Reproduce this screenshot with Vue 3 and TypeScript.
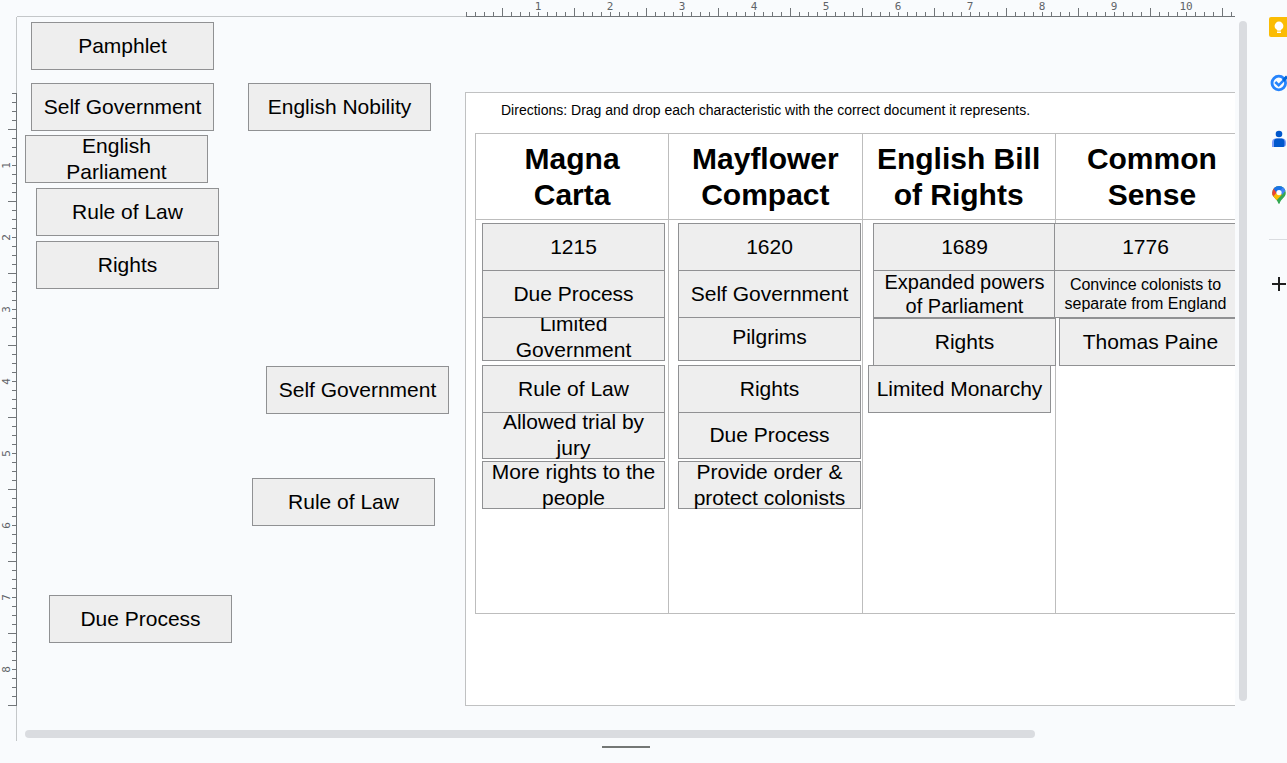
<script setup lang="ts">
interface Tile {
  text: string
  x: number
  y: number
  size?: 'medium' | 'small'
}

const W = 183

// Tiles in stacking order, placed on the free canvas (origin: inner corner of the rulers).
const tiles: Tile[] = [
  { text: 'Pamphlet', x: 14, y: 5 },
  { text: 'Self Government', x: 14, y: 66 },
  { text: 'English Nobility', x: 231, y: 66 },
  { text: 'English Parliament', x: 8, y: 118 },
  { text: 'Rule of Law', x: 19, y: 171 },
  { text: 'Rights', x: 19, y: 224 },
  { text: 'Self Government', x: 249, y: 349 },
  { text: 'Rule of Law', x: 235, y: 461 },
  { text: 'Due Process', x: 32, y: 578 },
  { text: '1215', x: 465, y: 206 },
  { text: 'Limited Government', x: 465, y: 296 },
  { text: 'Due Process', x: 465, y: 253 },
  { text: 'Allowed trial by jury', x: 465, y: 394 },
  { text: 'Rule of Law', x: 465, y: 348 },
  { text: 'More rights to the people', x: 465, y: 444 },
  { text: '1620', x: 661, y: 206 },
  { text: 'Pilgrims', x: 661, y: 296 },
  { text: 'Self Government', x: 661, y: 253 },
  { text: 'Due Process', x: 661, y: 394 },
  { text: 'Rights', x: 661, y: 348 },
  { text: 'Provide order & protect colonists', x: 661, y: 444 },
  { text: '1689', x: 856, y: 206 },
  { text: 'Expanded powers of Parliament', x: 856, y: 253, size: 'medium' },
  { text: 'Rights', x: 856, y: 301 },
  { text: 'Limited Monarchy', x: 851, y: 348 },
  { text: '1776', x: 1037, y: 206 },
  { text: 'Convince colonists to separate from England', x: 1037, y: 253, size: 'small' },
  { text: 'Thomas Paine', x: 1042, y: 301 },
]

const headings = ['Magna Carta', 'Mayflower Compact', 'English Bill of Rights', 'Common Sense']
const topInches = [1, 2, 3, 4, 5, 6, 7, 8, 9, 10]
const leftInches = [1, 2, 3, 4, 5, 6, 7, 8]

const place = (t: Tile) => ({ left: `${t.x}px`, top: `${t.y}px`, width: `${W}px` })
</script>

<template>
  <div class="app">
    <main class="editor">
      <div class="ruler-top" aria-hidden="true">
        <div class="scale-x">
          <span class="lead-x"></span>
          <span v-for="n in topInches" :key="n" class="inch-x">{{ n }}</span>
          <span class="inch-x"></span>
        </div>
      </div>
      <div class="ruler-left" aria-hidden="true">
        <div class="scale-y">
          <span class="lead-y"></span>
          <span v-for="n in leftInches" :key="n" class="inch-y"><b>{{ n }}</b></span>
          <span class="inch-y"></span>
        </div>
      </div>
      <div class="canvas">
        <section class="page">
          <p class="directions">
            Directions: Drag and drop each characteristic with the correct document it represents.
          </p>
          <table class="chart">
            <thead>
              <tr>
                <th v-for="h in headings" :key="h" scope="col">{{ h }}</th>
              </tr>
            </thead>
            <tbody>
              <tr>
                <td v-for="h in headings" :key="h"></td>
              </tr>
            </tbody>
          </table>
        </section>
        <div v-for="(t, i) in tiles" :key="i" class="tile" :class="t.size" :style="place(t)">
          <span>{{ t.text }}</span>
        </div>
      </div>
      <div class="bar-y"><div class="thumb-y"></div></div>
      <div class="bar-x"><div class="thumb-x"></div></div>
      <div class="grip"><div class="handle"></div></div>
    </main>

    <aside class="panel">
      <button type="button" aria-label="Keep">
        <svg width="20" height="20" viewBox="0 0 20 20">
          <rect x="0" y="0" width="20" height="20" rx="2" fill="#fbbc04" />
          <circle cx="10" cy="9" r="4.4" fill="#fff" />
          <path d="M8 11h4v2.600H8zM8 14.400h4v1.500H8z" fill="#fff" />
        </svg>
      </button>
      <button type="button" aria-label="Tasks">
        <svg width="20" height="20" viewBox="0 0 20 20">
          <circle cx="9.800" cy="10" r="6.800" fill="none" stroke="#2684fc" stroke-width="2.800" />
          <path d="M6.300 9l3.400 3.300L18 4" fill="none" stroke="#2684fc" stroke-width="2.600" />
          <path d="M13.200 6.600l3.800-4 2.200 2-4 4.200z" fill="#0066da" />
        </svg>
      </button>
      <button type="button" aria-label="Contacts">
        <svg width="20" height="20" viewBox="0 0 20 20">
          <path d="M3 18v-4.500a4 4 0 0 1 4-4h6a4 4 0 0 1 4 4V15a3 3 0 0 1-3 3z" fill="#7b9bf9" />
          <circle cx="10" cy="5" r="3.300" fill="#0057cc" />
          <path d="M5 18v-5.500a3 3 0 0 1 3-3h5a3 3 0 0 1 2.500 3V15a3 3 0 0 1-1 3z" fill="#0057cc" />
        </svg>
      </button>
      <button type="button" aria-label="Maps">
        <svg width="20" height="20" viewBox="0 0 20 20">
          <defs>
            <clipPath id="pin">
              <path d="M10 1a6.800 6.800 0 0 0-6.800 6.800c0 5 4.800 5.700 6.100 10.500q.7 1.400 1.400 0c1.300-4.800 6.100-5.500 6.100-10.500A6.800 6.800 0 0 0 10 1z" />
            </clipPath>
          </defs>
          <g clip-path="url(#pin)">
            <path d="M0 0h20v20H0z" fill="#34a853" />
            <path d="M0 11.500L8 5l5 4.500L6 17z" fill="#fbbc04" />
            <path d="M0 0h5l4 6-6 7-3-2z" fill="#ea4335" />
            <path d="M4 3l3-3h10v4l-8.500 5z" fill="#1a73e8" />
            <path d="M11 6l4-5 3 3-5 6z" fill="#4285f4" />
          </g>
          <circle cx="10" cy="7.600" r="2.600" fill="#fff" />
        </svg>
      </button>
      <hr />
      <button type="button" aria-label="Get add-ons">
        <svg width="20" height="20" viewBox="0 0 20 20">
          <path d="M10 3v14M3 10h14" stroke="#1f1f1f" stroke-width="2" />
        </svg>
      </button>
    </aside>
  </div>
</template>

<style>
body {
  margin: 0;
  background: #f9fbfd;
}
</style>

<style scoped>
.app {
  display: flex;
  height: 100vh;
  overflow: hidden;
  background: #f9fbfd;
  font-family: "Liberation Sans", Arial, sans-serif;
  color: #000;
}
.editor {
  flex: 1;
  min-width: 0;
  display: grid;
  grid-template-columns: 17px minmax(0, 1fr) 12px;
  grid-template-rows: 17px minmax(0, 1fr) 20px 22px;
}
.ruler-top {
  grid-column: 2;
  grid-row: 1;
  overflow: hidden;
  box-shadow: inset 0 -1px #c4c7c9;
}
.scale-x {
  display: flex;
  height: 17px;
  margin-left: 449px;
  overflow: hidden;
  border-bottom: 1px solid #717579;
  box-sizing: border-box;
}
.inch-x,
.lead-x {
  flex: none;
  box-sizing: border-box;
  height: 16px;
  background: repeating-linear-gradient(90deg, #717579 0 1px, transparent 1px 9px) 0 100% / 100% 4px no-repeat;
}
.lead-x {
  width: 36px;
}
.inch-x {
  width: 72px;
  background:
    linear-gradient(#717579, #717579) 0 100% / 1px 8px no-repeat,
    repeating-linear-gradient(90deg, #717579 0 1px, transparent 1px 9px) 0 100% / 100% 4px no-repeat;
  font: 11px/14px "DejaVu Sans Mono", monospace;
  color: #5f6368;
  text-align: center;
}
.ruler-left {
  grid-column: 1;
  grid-row: 2 / 4;
  padding-top: 76px;
  box-shadow: inset -1px 0 #c4c7c9;
}
.scale-y {
  display: flex;
  flex-direction: column;
  width: 17px;
  height: 613px;
  overflow: hidden;
  border-right: 1px solid #717579;
  box-sizing: border-box;
}
.lead-y,
.inch-y {
  flex: none;
  width: 16px;
  background: repeating-linear-gradient(#717579 0 1px, transparent 1px 9px) 100% 0 / 4px 100% no-repeat;
}
.lead-y {
  height: 36px;
}
.inch-y {
  display: flex;
  align-items: center;
  height: 72px;
  background:
    linear-gradient(#717579, #717579) 100% 0 / 8px 1px no-repeat,
    repeating-linear-gradient(#717579 0 1px, transparent 1px 9px) 100% 0 / 4px 100% no-repeat;
}
.inch-y b {
  writing-mode: vertical-rl;
  transform: rotate(180deg);
  font: 11px/14px "DejaVu Sans Mono", monospace;
  color: #5f6368;
}
.canvas {
  grid-column: 2;
  grid-row: 2;
  position: relative;
  overflow: hidden;
}
.page {
  box-sizing: border-box;
  width: 1000px;
  height: 614px;
  margin: 75px 0 0 448px;
  padding: 9px 9px 0;
  background: #fff;
  border: 1px solid #c0c1c2;
}
.directions {
  margin: 0 0 15px 26px;
  font-size: 14px;
  line-height: 16px;
}
.chart {
  border-collapse: collapse;
  table-layout: fixed;
  width: 774px;
}
.chart th,
.chart td {
  border: 1px solid #bdbdbd;
  padding: 0 8px;
}
.chart th {
  height: 85px;
  font-size: 30px;
  line-height: 36px;
  font-weight: 700;
}
.chart td {
  height: 393px;
}
.tile {
  position: absolute;
  display: flex;
  align-items: center;
  justify-content: center;
  box-sizing: border-box;
  height: 48px;
  padding: 0 7px;
  background: #eee;
  border: 1px solid #909193;
  font-size: 21px;
  line-height: 26px;
  text-align: center;
}
.tile.medium {
  font-size: 20px;
  line-height: 24px;
}
.tile.small {
  font-size: 16px;
  line-height: 19px;
}
.bar-y {
  grid-column: 3;
  grid-row: 1 / 3;
  padding: 21px 0 0 4px;
}
.thumb-y,
.thumb-x {
  border-radius: 4px;
  background: #dadce0;
}
.thumb-y {
  width: 8px;
  height: 680px;
}
.bar-x {
  grid-column: 2;
  grid-row: 3;
  padding: 9px 0 0 8px;
}
.thumb-x {
  width: 83.5%;
  height: 8px;
}
.grip {
  grid-column: 1 / 4;
  grid-row: 4;
  display: flex;
  justify-content: center;
  padding: 5px 0 0 5px;
}
.handle {
  width: 48px;
  height: 2px;
  background: #747775;
}
.panel {
  flex: none;
  box-sizing: border-box;
  width: 40px;
  overflow: hidden;
  padding: 9px 0 0 14px;
}
.panel button {
  display: block;
  width: 36px;
  height: 36px;
  margin: 0 0 20px;
  padding: 8px;
  border: 0;
  background: none;
}
.panel svg {
  display: block;
}
.panel hr {
  width: 20px;
  height: 1px;
  margin: 26px 0 26px 8px;
  border: 0;
  background: #dadce0;
}
</style>
